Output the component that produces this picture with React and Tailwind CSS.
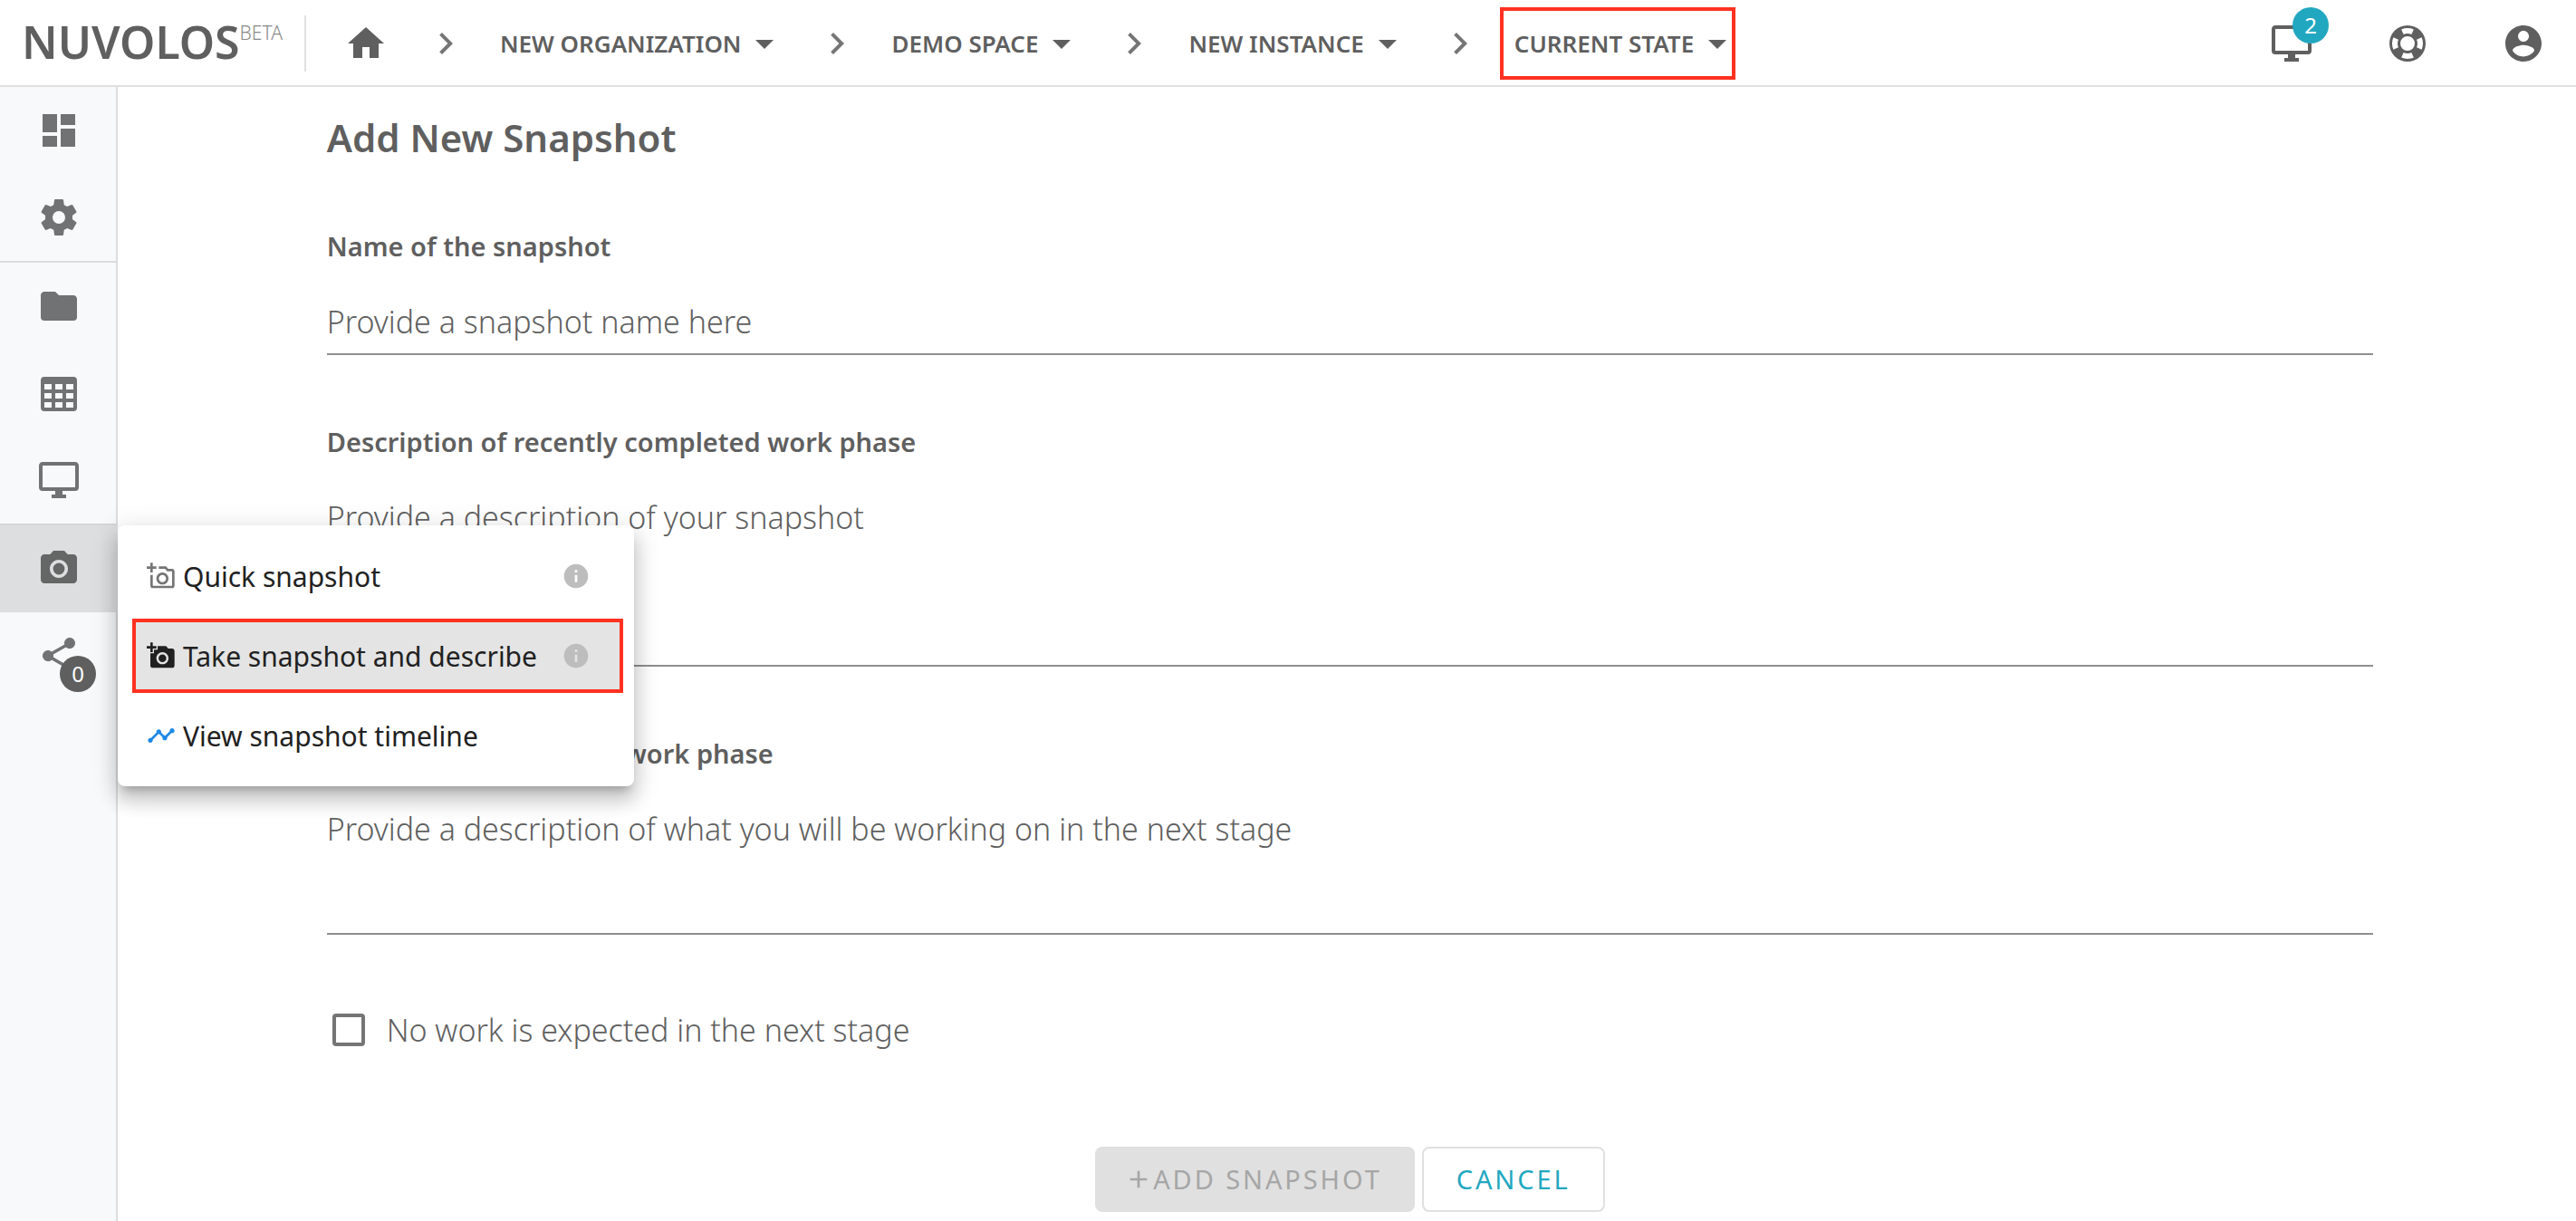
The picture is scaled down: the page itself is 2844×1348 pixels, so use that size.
import React from "react";
import {
  MdAddAPhoto,
  MdInfo,
  MdOutlineAddAPhoto,
  MdPhotoCamera,
  MdShare,
  MdTimeline,
} from "react-icons/md";

const PATHS = {
  home: "M10,20V14H14V20H19V12H22L12,3L2,12H5V20H10Z",
  chevron: "M8.59,16.58L13.17,12L8.59,7.41L10,6L16,12L10,18L8.59,16.58Z",
  caret: "M7,10L12,15L17,10H7Z",
  dashboard: "M13,3V9H21V3M13,21H21V11H13M3,21H11V15H3M3,13H11V3H3V13Z",
  cog: "M12,15.5A3.5,3.5 0 0,1 8.5,12A3.5,3.5 0 0,1 12,8.5A3.5,3.5 0 0,1 15.5,12A3.5,3.5 0 0,1 12,15.5M19.43,12.97C19.47,12.65 19.5,12.33 19.5,12C19.5,11.67 19.47,11.34 19.43,11L21.54,9.37C21.73,9.22 21.78,8.95 21.66,8.73L19.66,5.27C19.54,5.05 19.27,4.96 19.05,5.05L16.56,6.05C16.04,5.66 15.5,5.32 14.87,5.07L14.5,2.42C14.46,2.18 14.25,2 14,2H10C9.75,2 9.54,2.18 9.5,2.42L9.13,5.07C8.5,5.32 7.96,5.66 7.44,6.05L4.95,5.05C4.73,4.96 4.46,5.05 4.34,5.27L2.34,8.73C2.21,8.95 2.27,9.22 2.46,9.37L4.57,11C4.53,11.34 4.5,11.67 4.5,12C4.5,12.33 4.53,12.65 4.57,12.97L2.46,14.63C2.27,14.78 2.21,15.05 2.34,15.27L4.34,18.73C4.46,18.95 4.73,19.03 4.95,18.95L7.44,17.94C7.96,18.34 8.5,18.68 9.13,18.93L9.5,21.58C9.54,21.82 9.75,22 10,22H14C14.25,22 14.46,21.82 14.5,21.58L14.87,18.93C15.5,18.67 16.04,18.34 16.56,17.94L19.05,18.95C19.27,19.03 19.54,18.95 19.66,18.73L21.66,15.27C21.78,15.05 21.73,14.78 21.54,14.63L19.43,12.97Z",
  folder:
    "M10,4H4C2.89,4 2,4.89 2,6V18A2,2 0 0,0 4,20H20A2,2 0 0,0 22,18V8C22,6.89 21.1,6 20,6H12L10,4Z",
  table:
    "M4,3H20A2,2 0 0,1 22,5V20A2,2 0 0,1 20,22H4A2,2 0 0,1 2,20V5A2,2 0 0,1 4,3M4,7V10H8V7H4M10,7V10H14V7H10M20,10V7H16V10H20M4,12V15H8V12H4M4,20H8V17H4V20M10,12V15H14V12H10M10,20H14V17H10V20M20,20V17H16V20H20M20,12H16V15H20V12Z",
  monitor:
    "M21,16H3V4H21M21,2H3C1.89,2 1,2.89 1,4V16A2,2 0 0,0 3,18H10V20H8V22H16V20H14V18H21A2,2 0 0,0 23,16V4C23,2.89 22.1,2 21,2Z",
  lifebuoy:
    "M19.79,15.41C20.74,13.24 20.74,10.75 19.79,8.59L17.05,9.83C17.65,11.21 17.65,12.78 17.06,14.17L19.79,15.41M15.42,4.21C13.25,3.26 10.76,3.26 8.59,4.21L9.83,6.94C11.22,6.35 12.79,6.35 14.18,6.95L15.42,4.21M4.21,8.58C3.26,10.76 3.26,13.24 4.21,15.42L6.95,14.17C6.35,12.79 6.35,11.21 6.95,9.82L4.21,8.58M8.59,19.79C10.76,20.74 13.25,20.74 15.42,19.78L14.18,17.05C12.8,17.65 11.22,17.65 9.84,17.06L8.59,19.79M12,2A10,10 0 0,1 22,12A10,10 0 0,1 12,22A10,10 0 0,1 2,12A10,10 0 0,1 12,2M12,8A4,4 0 0,0 8,12A4,4 0 0,0 12,16A4,4 0 0,0 16,12A4,4 0 0,0 12,8Z",
  account:
    "M12 2C6.48 2 2 6.48 2 12s4.48 10 10 10 10-4.48 10-10S17.52 2 12 2zm0 3c1.66 0 3 1.34 3 3s-1.34 3-3 3-3-1.34-3-3 1.34-3 3-3zm0 14.2c-2.5 0-4.71-1.28-6-3.22.03-1.99 4-3.08 6-3.08 1.99 0 5.97 1.09 6 3.08-1.29 1.94-3.5 3.22-6 3.22z",
  plus: "M19,13H13V19H11V13H5V11H11V5H13V11H19V13Z",
};

function Icon({ name, className = "size-12" }) {
  return (
    <svg viewBox="0 0 24 24" fill="currentColor" fillRule="evenodd" aria-hidden="true" className={`shrink-0 ${className}`}>
      <path d={PATHS[name]} />
    </svg>
  );
}

function Crumb({ label, marked }) {
  return (
    <li className="flex items-center">
      <Icon name="chevron" className="size-12 text-[#757575]" />
      <button
        type="button"
        className={`ml-5 flex h-20 items-center border-4 pl-3 text-[26px] font-semibold ${
          marked ? "border-[#ff3120]" : "mr-9 border-transparent"
        }`}
      >
        {label}
        <Icon name="caret" className="-mr-2 ml-[2px] size-12" />
      </button>
    </li>
  );
}

function Header() {
  return (
    <header className="flex h-24 items-center border-b-2 border-[#e0e0e0] bg-white pt-[2px] text-[#5f5f5f]">
      <a href="#home" className="ml-6 flex h-16 items-start text-[50px] leading-[60px] font-semibold">
        NUVOLOS
        <span className="text-[21px] leading-10 font-light text-[#8a8a8a]">BETA</span>
      </a>
      <div className="ml-6 h-[62px] w-[2px] bg-[#e0e0e0]" />
      <nav aria-label="Breadcrumb" className="ml-[42px] flex items-center">
        <a href="#start" aria-label="Home" className="mr-10">
          <Icon name="home" />
        </a>
        <ol className="flex items-center">
          <Crumb label="NEW ORGANIZATION" />
          <Crumb label="DEMO SPACE" />
          <Crumb label="NEW INSTANCE" />
          <Crumb label="CURRENT STATE" marked />
        </ol>
      </nav>
      <div className="mr-[34px] ml-auto flex items-center gap-20">
        <button type="button" aria-label="Running applications" className="relative">
          <Icon name="monitor" />
          <span className="absolute -top-4 left-[25px] flex size-10 items-center justify-center rounded-full bg-[#22a7c0] text-2xl text-white">
            2
          </span>
        </button>
        <button type="button" aria-label="Help">
          <Icon name="lifebuoy" />
        </button>
        <button type="button" aria-label="Account">
          <Icon name="account" />
        </button>
      </div>
    </header>
  );
}

function SideButton({ label, children }) {
  return (
    <button type="button" aria-label={label} className="flex h-24 w-[130px] items-center justify-center">
      {children}
    </button>
  );
}

function MenuItem({ icon, label, info, marked }) {
  return (
    <button
      type="button"
      role="menuitem"
      className={`mr-3 ml-4 flex h-[82px] items-center border-4 pl-3 text-[30px] text-[#212121] ${
        marked ? "border-[#ff3120] bg-[#e4e4e4]" : "border-transparent"
      }`}
    >
      {icon}
      <span className="ml-2">{label}</span>
      {info && <MdInfo className="mr-8 ml-auto size-8 text-[#bdbdbd]" />}
    </button>
  );
}

function SnapshotMenu() {
  return (
    <div
      role="menu"
      className="absolute top-0 left-full z-10 flex w-[570px] flex-col gap-[6px] rounded-lg bg-white py-[15px] shadow-[0_10px_10px_-6px_rgba(0,0,0,0.2),0_16px_20px_2px_rgba(0,0,0,0.14),0_6px_28px_4px_rgba(0,0,0,0.12)]"
    >
      <MenuItem icon={<MdOutlineAddAPhoto className="size-8 text-[#757575]" />} label="Quick snapshot" info />
      <MenuItem icon={<MdAddAPhoto className="size-8" />} label="Take snapshot and describe" info marked />
      <MenuItem icon={<MdTimeline className="size-8 text-[#1e88e5]" />} label="View snapshot timeline" />
    </div>
  );
}

function Sidebar() {
  return (
    <aside className="w-[130px] shrink-0 border-r-2 border-[#dcdcdc] bg-[#f8f9fb] text-[#717274]">
      <SideButton label="Dashboard">
        <Icon name="dashboard" />
      </SideButton>
      <SideButton label="Settings">
        <Icon name="cog" />
      </SideButton>
      <div className="h-[2px] bg-[#dcdcdc]" />
      <SideButton label="Files">
        <Icon name="folder" />
      </SideButton>
      <SideButton label="Tables">
        <Icon name="table" />
      </SideButton>
      <SideButton label="Applications">
        <Icon name="monitor" />
      </SideButton>
      <div className="relative -mr-[2px] border-t-2 border-[#d5d6d8] bg-[#dddee0] text-[#656666]">
        <SideButton label="Snapshots">
          <MdPhotoCamera className="size-12" />
        </SideButton>
        <SnapshotMenu />
      </div>
      <SideButton label="Distribution">
        <span className="relative">
          <MdShare className="size-12" />
          <span className="absolute top-6 left-[25px] flex size-10 items-center justify-center rounded-full bg-[#5f5f5f] text-2xl text-white">
            0
          </span>
        </span>
      </SideButton>
    </aside>
  );
}

const fieldClass =
  "block w-full resize-none border-b-2 border-[#8f8f8f] bg-transparent text-[34px] leading-[46px] font-light outline-none placeholder:text-[#5f5f5f] placeholder:opacity-100";

function Field({ id, label, children }) {
  return (
    <div>
      <label htmlFor={id} className="mb-10 block text-[29px] leading-10 font-semibold">
        {label}
      </label>
      {children}
    </div>
  );
}

function SnapshotForm() {
  return (
    <form className="pt-[30px] pr-[8.25%] pl-[8.5%] text-[#5f5f5f]">
      <h1 className="text-[42px] leading-[52px] font-semibold">Add New Snapshot</h1>
      <div className="mt-[74px] flex flex-col gap-19">
        <Field id="name" label="Name of the snapshot">
          <input id="name" type="text" placeholder="Provide a snapshot name here" className={`h-[60px] pb-3 ${fieldClass}`} />
        </Field>
        <Field id="done" label="Description of recently completed work phase">
          <textarea id="done" placeholder="Provide a description of your snapshot" className={`h-[188px] ${fieldClass}`} />
        </Field>
        <Field id="next" label="Description of planned work phase">
          <textarea
            id="next"
            placeholder="Provide a description of what you will be working on in the next stage"
            className={`h-[140px] ${fieldClass}`}
          />
        </Field>
      </div>
      <label className="mt-20 ml-[6px] flex items-center gap-6 text-[34px] leading-[50px] font-light">
        <input type="checkbox" className="size-9 appearance-none rounded border-4 border-[#757575]" />
        No work is expected in the next stage
      </label>
      <div className="mt-[104px] flex justify-center gap-2 pb-[10px] text-[29px] tracking-widest">
        <button type="button" disabled className="flex h-18 items-center rounded-lg bg-[#e0e0e0] pr-9 pl-8 text-[#a6a6a6]">
          <Icon name="plus" className="size-8" />
          ADD SNAPSHOT
        </button>
        <button type="button" className="h-18 rounded-lg border-2 border-[#e0e0e0] px-9 text-[#22a7c0]">
          CANCEL
        </button>
      </div>
    </form>
  );
}

export default function App() {
  return (
    <div className="flex min-h-screen flex-col bg-white font-['Noto_Sans',sans-serif]">
      <Header />
      <div className="flex grow">
        <Sidebar />
        <main className="grow">
          <SnapshotForm />
        </main>
      </div>
    </div>
  );
}
